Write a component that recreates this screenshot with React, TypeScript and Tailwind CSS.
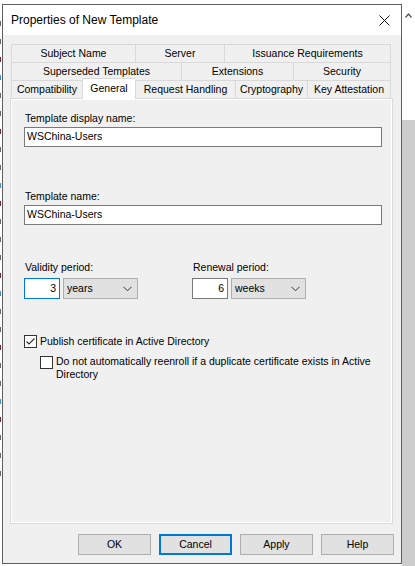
import React from "react";

function Tab({ w, label, last, selected }: { w: number; label: string; last?: boolean; selected?: boolean }) {
  return (
    <div
      style={{ width: w }}
      className={
        "flex items-center justify-center border-t border-l border-[#d9d9d9] " +
        (last ? "border-r " : "") +
        (selected ? "bg-white relative z-10 -mt-[2px] h-[21px] -mb-px pb-[2px]" : "h-[18px]")
      }
    >
      <span className="leading-none">{label}</span>
    </div>
  );
}

function Chevron() {
  return (
    <svg width="9" height="6" viewBox="0 0 9 6" className="shrink-0">
      <path d="M0.5 0.8 L4.5 4.8 L8.5 0.8" fill="none" stroke="#333" strokeWidth="1" />
    </svg>
  );
}

function NumberBox({ value, focused }: { value: string; focused?: boolean }) {
  return (
    <div
      className={
        "w-[36px] h-[21px] bg-white border flex items-center justify-end pr-[3px] " +
        (focused ? "border-[#0078d7]" : "border-[#7a7a7a]")
      }
    >
      {value}
    </div>
  );
}

function Combo({ value }: { value: string }) {
  return (
    <div className="w-[75px] h-[21px] bg-[#e1e1e1] border border-[#adadad] flex items-center justify-between pl-[3px] pr-[5px]">
      <span>{value}</span>
      <Chevron />
    </div>
  );
}

function Checkbox({ checked }: { checked?: boolean }) {
  return (
    <div className="w-[13px] h-[13px] border border-[#333333] bg-white shrink-0 flex items-center justify-center">
      {checked && (
        <svg width="11" height="11" viewBox="0 0 11 11">
          <path d="M1.5 5.5 L4 8 L9.5 2.5" fill="none" stroke="#333" strokeWidth="1.2" />
        </svg>
      )}
    </div>
  );
}

function Button({ label, def }: { label: string; def?: boolean }) {
  return (
    <div
      className={
        "w-[73px] h-[21px] bg-[#e1e1e1] flex items-center justify-center " +
        (def ? "border-2 border-[#0078d7]" : "border border-[#adadad]")
      }
    >
      {label}
    </div>
  );
}

export default function App() {
  return (
    <div className="w-[415px] h-[566px] bg-white flex overflow-hidden text-black font-['Liberation_Sans',Arial,sans-serif] text-[10.5px]">
      {/* left background sliver */}
      <div className="w-[2px] shrink-0 flex flex-col pt-[14px]">
        {[...Array(26)].map((_, i) => (
          <div key={i} className="h-[18px] flex items-center">
            <div
              className={
                "w-[1px] h-[5px] " +
                (i % 6 === 3 ? "bg-[#3b8fe0]" : i % 4 === 2 ? "bg-[#7a1f3d]" : "bg-[#666666]")
              }
            />
          </div>
        ))}
      </div>

      {/* dialog */}
      <div className="mt-[4px] w-[400px] h-[560px] shrink-0 border border-[#5f5f5f] bg-[#f0f0f0] flex flex-col">
        {/* title bar */}
        <div className="h-[30px] bg-white flex items-center justify-between pl-[8px] pr-[10px]">
          <span className="text-[12px] pb-[1px]">Properties of New Template</span>
          <svg width="11" height="11" viewBox="0 0 11 11" className="mr-[1px]">
            <path d="M0.5 0.5 L10.5 10.5 M10.5 0.5 L0.5 10.5" stroke="#111" strokeWidth="1" />
          </svg>
        </div>

        {/* tabs */}
        <div className="mt-[9px] ml-[8px] flex flex-col">
          <div className="flex">
            <Tab w={124} label="Subject Name" />
            <Tab w={89} label="Server" />
            <Tab w={167} label="Issuance Requirements" last />
          </div>
          <div className="flex">
            <Tab w={170} label="Superseded Templates" />
            <Tab w={112} label="Extensions" />
            <Tab w={98} label="Security" last />
          </div>
          <div className="flex items-end h-[18px]">
            <Tab w={71} label="Compatibility" />
            <Tab w={53} label="General" selected />
            <Tab w={100} label="Request Handling" />
            <Tab w={72} label="Cryptography" />
            <Tab w={84} label="Key Attestation" last />
          </div>
        </div>

        {/* panel */}
        <div className="ml-[7px] w-[383px] h-[426px] border border-[#d9d9d9] bg-white p-[1px]">
          <div className="w-full h-full bg-[#f0f0f0] flex flex-col pl-[12px] pr-[9px]">
            <div className="mt-[11px] h-[14px] leading-[14px] pl-[1px]">Template display name:</div>
            <div className="mt-[2px] h-[20px] bg-white border border-[#7a7a7a] flex items-center pl-[2px]">
              WSChina-Users
            </div>
            <div className="mt-[42px] h-[14px] leading-[14px] pl-[1px]">Template name:</div>
            <div className="mt-[2px] h-[20px] bg-white border border-[#7a7a7a] flex items-center pl-[2px]">
              WSChina-Users
            </div>

            <div className="mt-[35px] flex">
              <div className="w-[168px] flex flex-col">
                <div className="h-[14px] leading-[14px] pl-[1px]">Validity period:</div>
                <div className="mt-[4px] flex gap-[3px]">
                  <NumberBox value="3" focused />
                  <Combo value="years" />
                </div>
              </div>
              <div className="flex flex-col">
                <div className="h-[14px] leading-[14px] pl-[1px]">Renewal period:</div>
                <div className="mt-[4px] flex gap-[3px]">
                  <NumberBox value="6" />
                  <Combo value="weeks" />
                </div>
              </div>
            </div>

            <div className="mt-[35px] flex items-center gap-[3px] h-[14px]">
              <Checkbox checked />
              <span className="leading-[14px]">Publish certificate in Active Directory</span>
            </div>
            <div className="mt-[7px] ml-[16px] flex items-start gap-[3px]">
              <div className="mt-[1px]">
                <Checkbox />
              </div>
              <span className="leading-[13px] w-[330px]">
                Do not automatically reenroll if a duplicate certificate exists in Active Directory
              </span>
            </div>
          </div>
        </div>

        {/* buttons */}
        <div className="mt-[10px] flex justify-end gap-[8px] pr-[7px]">
          <Button label="OK" />
          <Button label="Cancel" def />
          <Button label="Apply" />
          <Button label="Help" />
        </div>
      </div>

      {/* right scrollbar */}
      <div className="flex-1 flex flex-col">
        <div className="h-[120px] bg-white flex justify-center pt-[13px]">
          <svg width="7" height="5" viewBox="0 0 7 5">
            <path d="M0.5 4.5 L3.5 1 L6.5 4.5" fill="none" stroke="#555" strokeWidth="1.3" />
          </svg>
        </div>
        <div className="flex-1 bg-[#cdcdcd]" />
      </div>
    </div>
  );
}
